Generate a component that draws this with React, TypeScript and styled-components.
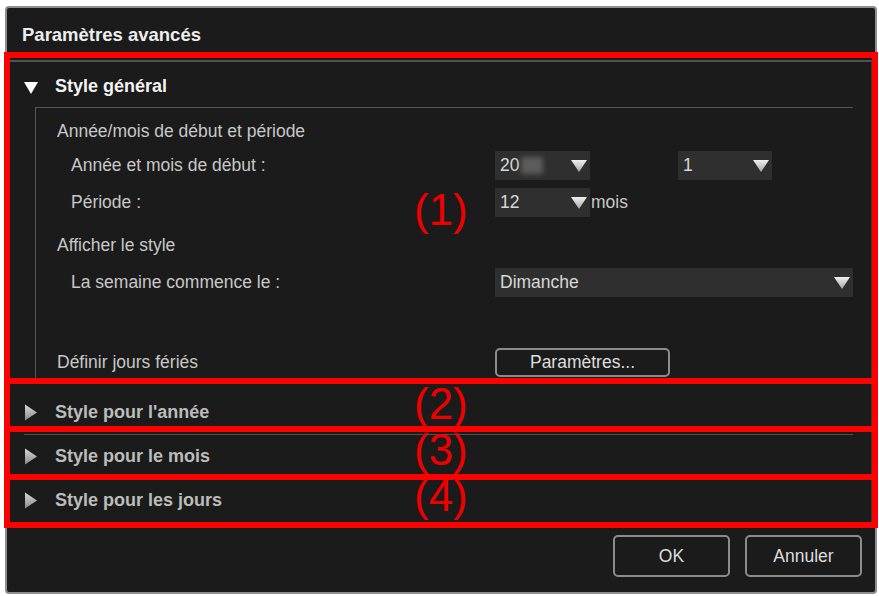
import React from "react";
import styled, { createGlobalStyle } from "styled-components";

const GlobalStyle = createGlobalStyle`
  html, body {
    margin: 0;
    padding: 0;
    background: #ffffff;
  }
  body {
    font-family: "Liberation Sans", Arial, sans-serif;
  }
`;

// Page + dialog shell
const Stage = styled.div`
  position: relative;
  width: 879px;
  height: 596px;
  padding: 6px 0 0 5px;
  box-sizing: border-box;
`;

const Dialog = styled.div`
  width: 872px;
  height: 588px;
  box-sizing: border-box;
  border: 2px solid #8e8e8e;
  border-radius: 4px;
  background: #1b1b1b;
  display: flex;
  flex-direction: column;
`;

const TitleBar = styled.div`
  height: 52px;
  box-sizing: border-box;
  padding: 2px 0 0 15px;
  display: flex;
  align-items: center;
  color: #ededed;
  font-size: 18.5px;
  font-weight: bold;
`;

const Panel = styled.div`
  height: 468px;
  box-sizing: border-box;
  margin: 0 3px 0 2px;
  border-top: 2px solid #525252;
  border-right: 1px solid #3c3c3c;
  padding-bottom: 6px;
`;

// Accordion headers
const SectionHeader = styled.div<{ $open?: boolean }>`
  height: ${(p) => (p.$open ? 45 : 43)}px;
  box-sizing: border-box;
  padding: ${(p) => (p.$open ? 3 : 0)}px 0 0 15px;
  display: flex;
  align-items: center;
  gap: 17px;
  font-size: 18px;
  font-weight: bold;
  color: ${(p) => (p.$open ? "#f3f3f3" : "#bcbcbc")};
`;

const Caret = styled.svg`
  width: 14px;
  height: 17px;
  flex: none;
`;

const Divider = styled.div`
  height: 1px;
  margin: 0 18px 0 15px;
  background: #4f4f4f;
`;

const Collapsed = styled.div`
  margin-top: 11px;
`;

// Expanded group
const Group = styled.div`
  margin: 0 18px 0 26px;
  border-top: 1px solid #565656;
  border-left: 1px solid #565656;
  padding: 0 0 3px 21px;
  font-size: 17.5px;
  color: #c8c8c8;
`;

const Row = styled.div<{ $gap: number }>`
  display: grid;
  grid-template-columns: 438px 1fr;
  align-items: center;
  height: 29px;
  margin-top: ${(p) => p.$gap}px;
`;

const Label = styled.span<{ $indent?: boolean }>`
  padding-left: ${(p) => (p.$indent ? 14 : 0)}px;
  white-space: nowrap;
`;

const Controls = styled.div`
  display: flex;
  align-items: center;
  height: 100%;
`;

const Select = styled.div<{ $width?: number; $offset?: number }>`
  width: ${(p) => (p.$width ? `${p.$width}px` : "100%")};
  margin-left: ${(p) => p.$offset ?? 0}px;
  height: 29px;
  box-sizing: border-box;
  padding: 0 3px 0 5px;
  background: #2f2f2f;
  display: flex;
  align-items: center;
  justify-content: space-between;
  color: #d8d8d8;
  font-size: 17.5px;
`;

const Value = styled.span`
  display: flex;
  align-items: center;
`;

const Redacted = styled.span`
  width: 22px;
  height: 17px;
  margin-left: 2px;
  background: #5c5c5c;
  filter: blur(2.5px);
`;

const Arrow = styled.svg`
  width: 16px;
  height: 13px;
  flex: none;
`;

const Unit = styled.span`
  margin-left: 1px;
  color: #c8c8c8;
`;

const Button = styled.button<{ $width: number; $height: number }>`
  width: ${(p) => p.$width}px;
  height: ${(p) => p.$height}px;
  box-sizing: border-box;
  padding: 0;
  border: 2px solid #8c8c8c;
  border-radius: 5px;
  background: #1b1b1b;
  color: #dedede;
  font-family: "Liberation Sans", Arial, sans-serif;
  font-size: 17.5px;
`;

const Footer = styled.div`
  flex: 1;
  display: flex;
  justify-content: flex-end;
  gap: 15px;
  padding: 7px 13px 0 0;
`;

// Red annotation overlay
const Frame = styled.div<{ $top: number; $height: number }>`
  position: absolute;
  left: 4px;
  width: 874px;
  top: ${(p) => p.$top}px;
  height: ${(p) => p.$height}px;
  box-sizing: border-box;
  border: 6px solid #ff0000;
  pointer-events: none;
`;

const Tag = styled.div<{ $top: number }>`
  position: absolute;
  left: 414px;
  top: ${(p) => p.$top}px;
  font-family: "Liberation Sans", Arial, sans-serif;
  font-size: 44px;
  line-height: 1;
  color: #ee0000;
  pointer-events: none;
`;

const DownCaret = () => (
  <Caret viewBox="0 0 14 17">
    <polygon points="0,4 14,4 7,16" fill="#ffffff" />
  </Caret>
);

const RightCaret = () => (
  <Caret viewBox="0 0 14 17">
    <defs>
      <linearGradient id="rc" x1="0" y1="0" x2="0" y2="1">
        <stop offset="0" stopColor="#d8d8d8" />
        <stop offset="1" stopColor="#8a8a8a" />
      </linearGradient>
    </defs>
    <polygon points="1,0.5 13,8.5 1,16.5" fill="url(#rc)" />
  </Caret>
);

const DropArrow = () => (
  <Arrow viewBox="0 0 16 13">
    <defs>
      <linearGradient id="da" x1="0" y1="0" x2="0" y2="1">
        <stop offset="0" stopColor="#f0f0f0" />
        <stop offset="1" stopColor="#a6a6a6" />
      </linearGradient>
    </defs>
    <polygon points="0,1 16,1 8,13" fill="url(#da)" />
  </Arrow>
);

const Dropdown: React.FC<{
  value: string;
  width?: number;
  offset?: number;
  hidden?: boolean;
}> = ({ value, width, offset, hidden }) => (
  <Select $width={width} $offset={offset}>
    <Value>
      {value}
      {hidden && <Redacted />}
    </Value>
    <DropArrow />
  </Select>
);

const collapsed = ["Style pour l'année", "Style pour le mois", "Style pour les jours"];

export default function App() {
  return (
    <>
      <GlobalStyle />
      <Stage>
        <Dialog>
          <TitleBar>Paramètres avancés</TitleBar>
          <Panel>
            <SectionHeader $open>
              <DownCaret />
              Style général
            </SectionHeader>
            <Group>
              <Row $gap={9}>
                <Label>Année/mois de début et période</Label>
              </Row>
              <Row $gap={5}>
                <Label $indent>Année et mois de début :</Label>
                <Controls>
                  <Dropdown value="20" width={95} hidden />
                  <Dropdown value="1" width={94} offset={88} />
                </Controls>
              </Row>
              <Row $gap={8}>
                <Label $indent>Période :</Label>
                <Controls>
                  <Dropdown value="12" width={95} />
                  <Unit>mois</Unit>
                </Controls>
              </Row>
              <Row $gap={14}>
                <Label>Afficher le style</Label>
              </Row>
              <Row $gap={8}>
                <Label $indent>La semaine commence le :</Label>
                <Controls>
                  <Dropdown value="Dimanche" />
                </Controls>
              </Row>
              <Row $gap={51}>
                <Label>Définir jours fériés</Label>
                <Controls>
                  <Button $width={175} $height={29}>
                    Paramètres...
                  </Button>
                </Controls>
              </Row>
            </Group>
            <Collapsed>
              {collapsed.map((title, i) => (
                <React.Fragment key={title}>
                  {i > 0 && <Divider />}
                  <SectionHeader>
                    <RightCaret />
                    {title}
                  </SectionHeader>
                </React.Fragment>
              ))}
            </Collapsed>
          </Panel>
          <Footer>
            <Button $width={117} $height={42}>
              OK
            </Button>
            <Button $width={117} $height={42}>
              Annuler
            </Button>
          </Footer>
        </Dialog>

        <Frame $top={52} $height={332} />
        <Frame $top={378} $height={54} />
        <Frame $top={426} $height={54} />
        <Frame $top={474} $height={54} />
        <Tag $top={188}>(1)</Tag>
        <Tag $top={382}>(2)</Tag>
        <Tag $top={428}>(3)</Tag>
        <Tag $top={474}>(4)</Tag>
      </Stage>
    </>
  );
}
